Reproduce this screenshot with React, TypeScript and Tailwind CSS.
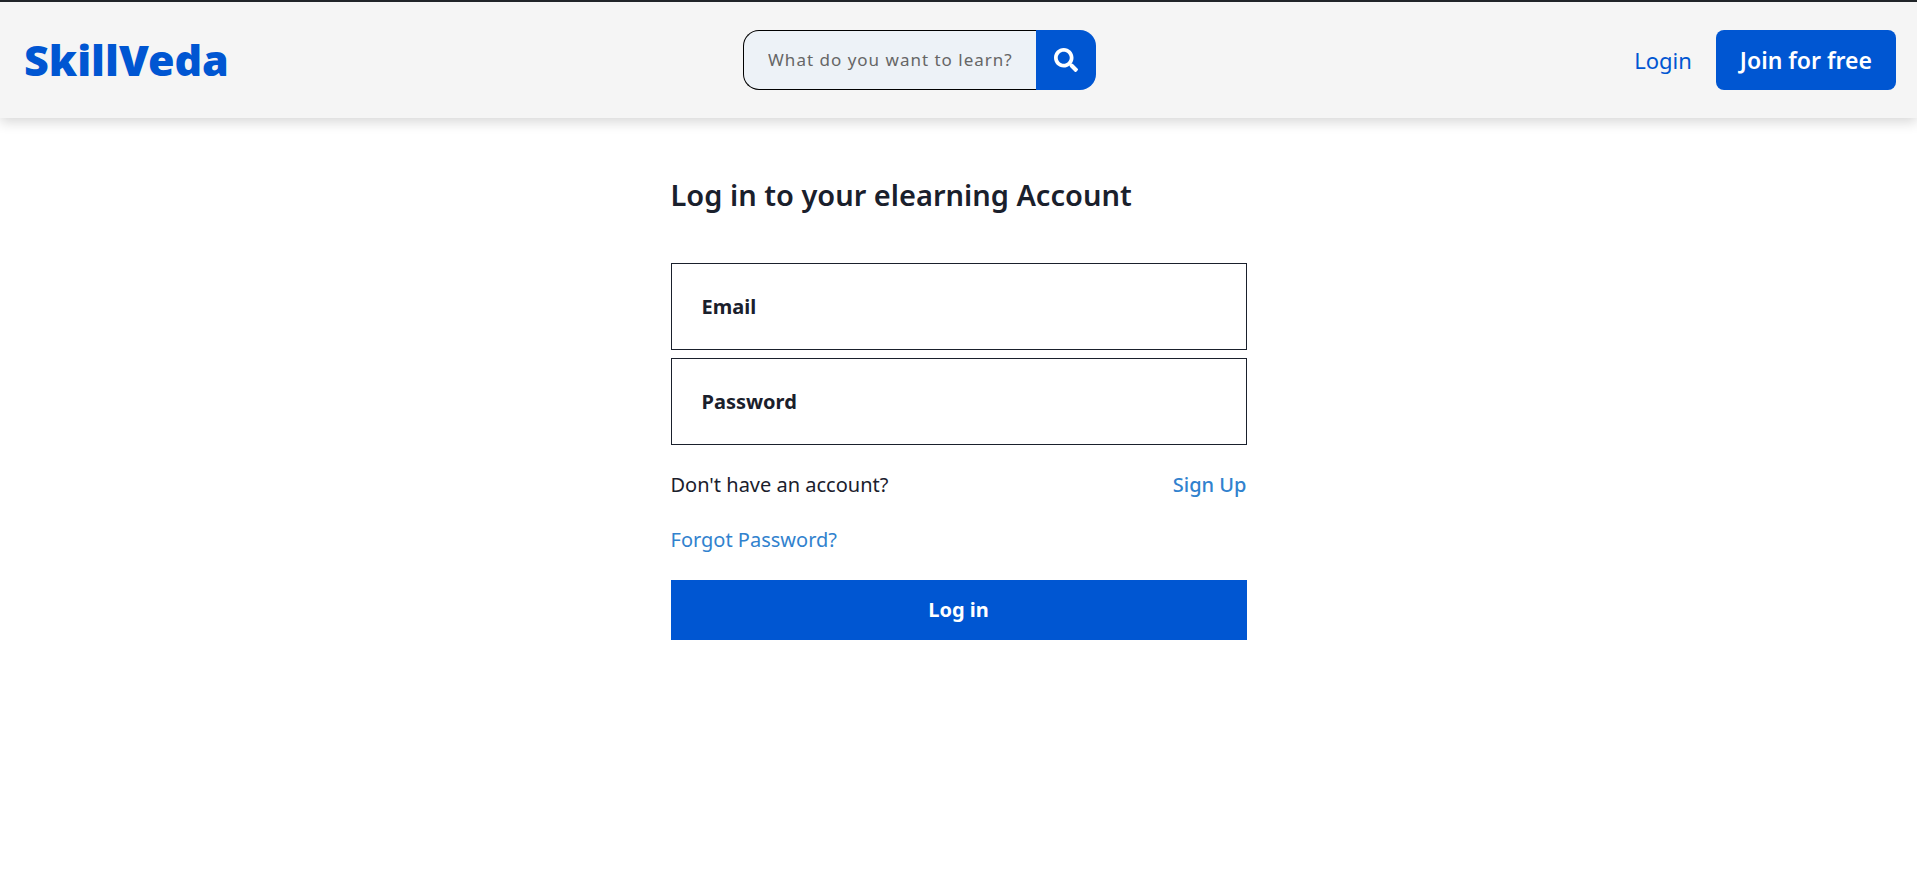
import { FaSearch } from "react-icons/fa";

function Header() {
  return (
    <header className="flex items-center justify-between border-t-2 border-[#212529] bg-[#f5f5f5] py-7 pr-[21px] pl-6 shadow-[0_4px_12px_rgba(0,0,0,0.16)]">
      <a href="#home" className="text-[43px] leading-[60px] font-black text-[#0056d2]">
        SkillVeda
      </a>
      <form role="search" className="flex h-[60px]" onSubmit={(e) => e.preventDefault()}>
        <input
          type="search"
          aria-label="Search courses"
          placeholder="What do you want to learn?"
          className="w-[293px] rounded-l-2xl border border-r-0 border-black bg-[#edf2f7] pl-6 text-[17px] tracking-[1px] outline-none placeholder:text-[#666666]"
        />
        <button
          type="submit"
          aria-label="Search"
          className="flex w-[60px] items-center justify-center rounded-r-2xl bg-[#0056d2] text-white"
        >
          <FaSearch size={24} />
        </button>
      </form>
      <nav className="flex items-center">
        <a href="#login" className="px-6 text-[22px] text-[#0056d2]">
          Login
        </a>
        <button
          type="button"
          className="h-[60px] rounded-lg bg-[#0056d2] px-6 text-[23px] font-semibold text-white"
        >
          Join for free
        </button>
      </nav>
    </header>
  );
}

function Field({ label, type }: { label: string; type: string }) {
  return (
    <input
      type={type}
      aria-label={label}
      placeholder={label}
      className="h-[87px] w-full border border-[#1a202c] px-[30px] text-xl font-bold text-[#1a202c] outline-none placeholder:text-[#1a202c]"
    />
  );
}

export default function App() {
  return (
    <div className="bg-white font-['Noto_Sans',sans-serif] text-[#1a202c]">
      <Header />
      <main className="mx-auto max-w-[576px] pt-[57px]">
        <h1 className="text-[29px] leading-10 font-semibold">Log in to your elearning Account</h1>
        <form className="mt-12 flex flex-col" onSubmit={(e) => e.preventDefault()}>
          <div className="flex flex-col gap-2">
            <Field label="Email" type="email" />
            <Field label="Password" type="password" />
          </div>
          <div className="mt-6 flex justify-between text-xl leading-8">
            <p>Don't have an account?</p>
            <a href="#signup" className="font-medium text-[#3182ce]">
              Sign Up
            </a>
          </div>
          <a href="#forgot" className="mt-[23px] self-start text-xl leading-8 text-[#3182ce]">
            Forgot Password?
          </a>
          <button type="submit" className="mt-6 h-[60px] bg-[#0056d2] text-xl font-bold text-white">
            Log in
          </button>
        </form>
      </main>
    </div>
  );
}
